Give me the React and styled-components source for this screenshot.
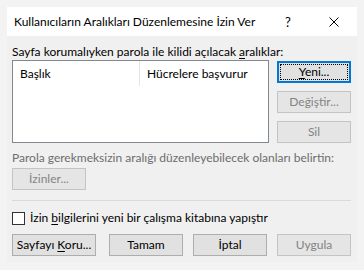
import React from "react";
import styled, { createGlobalStyle } from "styled-components";

const Global = createGlobalStyle`
  html, body { margin: 0; padding: 0; background: #f3f3f3; }
  body { font-family: Lato, "Noto Sans", sans-serif; font-size: 12px; color: #000; }
`;

const Page = styled.div`
  width: 364px;
  height: 270px;
  padding: 7px 7px 8px 7px;
  box-sizing: border-box;
  background: #f3f3f3;
`;

const Dialog = styled.div`
  width: 350px;
  height: 255px;
  background: #f0f0f0;
  display: flex;
  flex-direction: column;
`;

const TitleBar = styled.div`
  height: 29px;
  background: #fff;
  display: flex;
  align-items: center;
  padding-left: 7px;
`;

const Title = styled.div`
  flex: 1;
  min-width: 0;
  overflow: hidden;
  font-size: 12px;
  line-height: 16px;
  white-space: nowrap;
`;

const TitleButton = styled.div`
  flex: none;
  width: ${(p) => p.$w}px;
  height: 29px;
  display: flex;
  align-items: center;
  justify-content: center;
  font-size: 13px;
`;

const Body = styled.div`
  flex: 1;
  padding: 8px 6px 7px 5px;
  display: flex;
  flex-direction: column;
`;

const Label = styled.div`
  line-height: 16px;
  white-space: nowrap;
  color: ${(p) => (p.$disabled ? "#6d6d6d" : "#000")};
  margin-top: ${(p) => p.$mt || 0}px;
`;

const U = styled.span`
  text-decoration: underline;
  text-underline-offset: 2px;
  text-decoration-thickness: 1px;
`;

const Row = styled.div`
  display: flex;
  gap: 8px;
  align-items: flex-start;
`;

const ListBox = styled.div`
  width: 257px;
  height: 83px;
  box-sizing: border-box;
  border: 1px solid #828790;
  background: #fff;
`;

const Header = styled.div`
  display: flex;
  height: 25px;
`;

const Col = styled.div`
  width: ${(p) => (p.$w ? p.$w + "px" : "auto")};
  flex: ${(p) => (p.$w ? "none" : 1)};
  display: flex;
  align-items: center;
  padding-left: 7px;
  box-sizing: border-box;
  border-right: ${(p) => (p.$divider ? "1px solid #e5e5e5" : "none")};
  white-space: nowrap;
`;

const ButtonCol = styled.div`
  display: flex;
  flex-direction: column;
  gap: 8px;
  padding-top: 1px;
`;

const Button = styled.div`
  position: relative;
  width: ${(p) => p.$w || 74}px;
  height: 22px;
  box-sizing: border-box;
  display: flex;
  align-items: center;
  justify-content: center;
  background: ${(p) => (p.$disabled ? "#e5e5e5" : "#e1e1e1")};
  border: ${(p) =>
    p.$default ? "2px solid #0078d7" : p.$disabled ? "1px solid #c4c4c4" : "1px solid #adadad"};
  color: ${(p) => (p.$disabled ? "#838383" : "#000")};
  white-space: nowrap;
  line-height: 16px;
  ${(p) =>
    p.$default &&
    `&::after {
      content: "";
      position: absolute;
      inset: 1px;
      border: 1px dotted #000;
    }`}
`;

const ButtonWrap = styled.div`
  margin-top: 2px;
`;

const Separator = styled.div`
  height: 1px;
  background: #dadada;
  margin-top: 10px;
`;

const CheckRow = styled.div`
  display: flex;
  align-items: center;
  gap: 5px;
  margin-top: 9px;
  line-height: 16px;
`;

const CheckBox = styled.div`
  width: 13px;
  height: 13px;
  box-sizing: border-box;
  border: 1px solid #333;
  background: #fff;
`;

const Footer = styled.div`
  display: flex;
  gap: 10px;
  margin-top: 8px;
  & > :first-child { margin-right: auto; }
`;

export default function App() {
  return (
    <>
      <Global />
      <Page>
        <Dialog>
          <TitleBar>
            <Title>Kullanıcıların Aralıkları Düzenlemesine İzin Ver</Title>
            <TitleButton $w={46}>?</TitleButton>
            <TitleButton $w={46}>
              <svg width="10" height="10" viewBox="0 0 10 10">
                <path d="M0.5 0.5 L9.5 9.5 M9.5 0.5 L0.5 9.5" stroke="#000" strokeWidth="1" />
              </svg>
            </TitleButton>
          </TitleBar>
          <Body>
            <Label>
              Sayfa korumalıyken parola ile kilidi açılacak <U>a</U>ralıklar:
            </Label>
            <Row>
              <ListBox>
                <Header>
                  <Col $w={127} $divider>Başlık</Col>
                  <Col>Hücrelere başvurur</Col>
                </Header>
              </ListBox>
              <ButtonCol>
                <Button $default>
                  <span><U>Y</U>eni...</span>
                </Button>
                <Button $disabled>Değiştir...</Button>
                <Button $disabled>Sil</Button>
              </ButtonCol>
            </Row>
            <Label $disabled $mt={7}>
              Parola gerekmeksizin aralığı düzenleyebilecek olanları belirtin:
            </Label>
            <ButtonWrap>
              <Button $disabled>İzinler...</Button>
            </ButtonWrap>
            <Separator />
            <CheckRow>
              <CheckBox />
              <span>
                İzin <U>b</U>ilgilerini yeni bir çalışma kitabına yapıştır
              </span>
            </CheckRow>
            <Footer>
              <Button $w={84}>
                <span>Sayfayı <U>K</U>oru...</span>
              </Button>
              <Button>Tamam</Button>
              <Button>İptal</Button>
              <Button $disabled>Uygula</Button>
            </Footer>
          </Body>
        </Dialog>
      </Page>
    </>
  );
}
